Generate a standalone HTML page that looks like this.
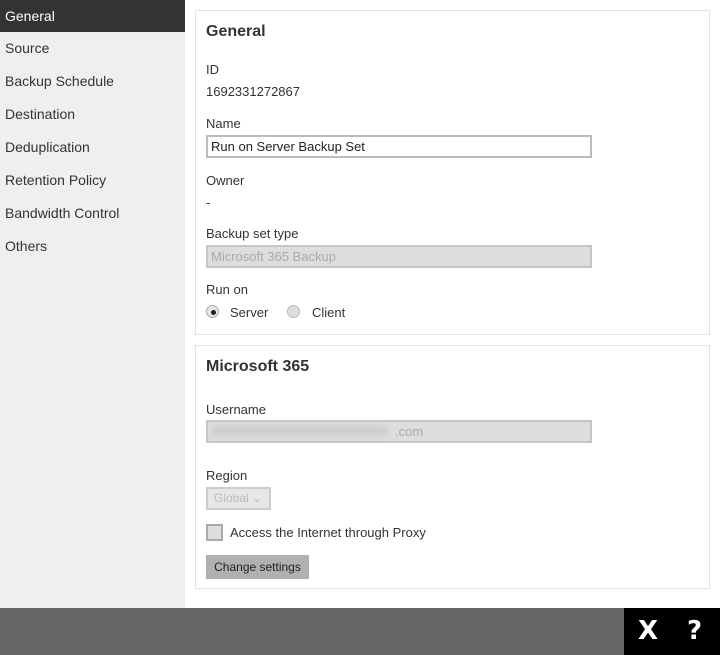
<!DOCTYPE html>
<html><head><style>
*{box-sizing:border-box;margin:0;padding:0}
body{width:720px;height:655px;position:relative;background:#fff;font-family:"Liberation Sans",Arial,sans-serif;font-size:13px;color:#333;overflow:hidden}
.side{position:absolute;left:0;top:0;width:185px;height:608px;background:#efefef;font-size:14px}
.side div{position:absolute;left:0;width:185px;height:33px;line-height:33px;padding-left:5px;color:#333}
.side .act{background:#333;color:#fff;height:32px;line-height:32px}
.panel{position:absolute;left:195px;width:515px;border:1px solid #e2e2e2;background:#fff}
.t{position:absolute;left:10px}
h2{position:absolute;left:10px;font-size:16px;font-weight:bold;color:#333}
.inp{position:absolute;left:10px;width:386px;height:23px;border:2px solid #bbb;padding-left:3px;line-height:19px;font-size:13px}
.dis{background:#ddd;color:#aaa;border-color:#c6c6c6}
.radio{position:absolute;width:13px;height:13px;border-radius:50%;border:1px solid #aaa;background:#e6e6e6}
.bottom{position:absolute;left:0;top:608px;width:720px;height:47px;background:#666}
.bk{position:absolute;left:624px;top:608px;width:96px;height:47px;background:#000;color:#fff;font-weight:bold;font-size:26px;font-family:"DejaVu Sans",sans-serif}
</style></head><body>
<div class="side">
<div class="act" style="top:0">General</div>
<div style="top:32px">Source</div>
<div style="top:65px">Backup Schedule</div>
<div style="top:98px">Destination</div>
<div style="top:131px">Deduplication</div>
<div style="top:164px">Retention Policy</div>
<div style="top:197px">Bandwidth Control</div>
<div style="top:230px">Others</div>
</div>
<div class="panel" style="top:10px;height:325px">
<h2 style="top:12px">General</h2>
<div class="t" style="top:51px">ID</div>
<div class="t" style="top:73px">1692331272867</div>
<div class="t" style="top:105px">Name</div>
<div class="inp" style="top:124px;color:#222">Run on Server Backup Set</div>
<div class="t" style="top:162px">Owner</div>
<div class="t" style="top:184px">-</div>
<div class="t" style="top:215px">Backup set type</div>
<div class="inp dis" style="top:234px">Microsoft 365 Backup</div>
<div class="t" style="top:271px">Run on</div>
<div class="radio" style="left:10px;top:294px"><div style="position:absolute;left:4px;top:4px;width:5px;height:5px;border-radius:50%;background:#222"></div></div>
<div class="t" style="left:34px;top:294px">Server</div>
<div class="radio" style="left:91px;top:294px;border-color:#bbb;background:#ddd"></div>
<div class="t" style="left:116px;top:294px">Client</div>
</div>
<div class="panel" style="top:345px;height:244px">
<h2 style="top:12px">Microsoft 365</h2>
<div class="t" style="top:56px">Username</div>
<div class="inp dis" style="top:74px;padding-left:187px">.com</div>
<div style="position:absolute;left:16px;top:80px;width:175px;height:10px;background:#ccc;filter:blur(3px)"></div>
<div class="t" style="top:122px">Region</div>
<div style="position:absolute;left:10px;top:141px;width:65px;height:23px;border:2px solid #ccc;background:#e6e6e6;color:#bbb;font-size:12px;line-height:19px;padding-left:6px">Global ⌄</div>
<div style="position:absolute;left:10px;top:178px;width:17px;height:17px;border:2px solid #aaa;background:#ddd"></div>
<div class="t" style="left:34px;top:179px">Access the Internet through Proxy</div>
<div style="position:absolute;left:10px;top:209px;width:103px;height:24px;background:#b0b0b0;font-size:12px;line-height:24px;text-align:center;color:#222">Change settings</div>
</div>
<div class="bottom"></div>
<div class="bk"><span style="position:absolute;left:14px;top:8px">X</span><span style="position:absolute;left:63px;top:8px">?</span></div>
</body></html>
